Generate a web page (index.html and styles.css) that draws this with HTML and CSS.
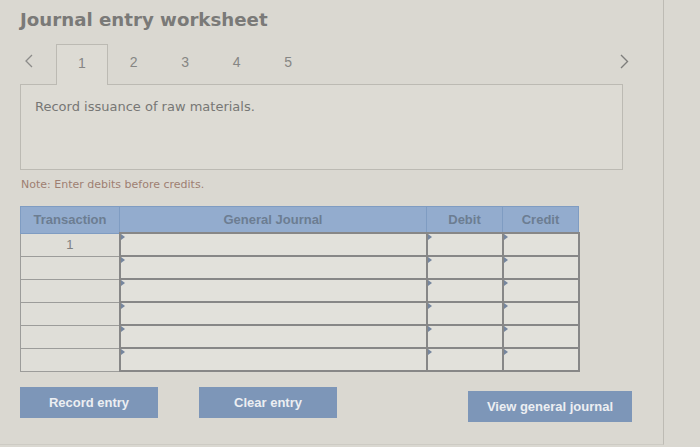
FILE: index.html
```html
<!DOCTYPE html>
<html>
<head>
<meta charset="utf-8">
<link rel="stylesheet" href="styles.css">
</head>
<body>
<div class="page">
  <h1 class="title">Journal entry worksheet</h1>
  <div class="tabbar">
    <div class="tabstrip">
      <div class="nav prev"><svg width="10" height="14" viewBox="0 0 10 14"><polyline points="8,1 2,7 8,13" fill="none" stroke="#8c8c8a" stroke-width="1.3"/></svg></div>
      <div class="tab active">1</div>
      <div class="tab">2</div>
      <div class="tab">3</div>
      <div class="tab">4</div>
      <div class="tab">5</div>
      <div class="fill"></div>
    </div>
    <div class="nav next"><svg width="10" height="15" viewBox="0 0 10 15"><polyline points="2,1 8.5,7.5 2,14" fill="none" stroke="#7e7e7c" stroke-width="1.4"/></svg></div>
  </div>
  <div class="panel">Record issuance of raw materials.</div>
  <p class="note">Note: Enter debits before credits.</p>
  <table class="journal">
    <colgroup>
      <col class="c-tr"><col class="c-gj"><col class="c-amt"><col class="c-amt">
    </colgroup>
    <thead>
      <tr><th>Transaction</th><th>General Journal</th><th>Debit</th><th>Credit</th></tr>
    </thead>
    <tbody>
      <tr><td class="tr">1</td><td class="in"></td><td class="in"></td><td class="in"></td></tr>
      <tr><td class="tr"></td><td class="in"></td><td class="in"></td><td class="in"></td></tr>
      <tr><td class="tr"></td><td class="in"></td><td class="in"></td><td class="in"></td></tr>
      <tr><td class="tr"></td><td class="in"></td><td class="in"></td><td class="in"></td></tr>
      <tr><td class="tr"></td><td class="in"></td><td class="in"></td><td class="in"></td></tr>
      <tr><td class="tr"></td><td class="in"></td><td class="in"></td><td class="in"></td></tr>
    </tbody>
  </table>
  <div class="actions">
    <button class="btn">Record entry</button>
    <button class="btn clear">Clear entry</button>
    <button class="btn view">View general journal</button>
  </div>
</div>
</body>
</html>
```

FILE: styles.css
```css
html, body {
  margin: 0;
  padding: 0;
  background: #dad8d1;
}
.page {
  box-sizing: border-box;
  width: 664px;
  height: 445px;
  padding: 8px 0 0 20px;
  border-right: 1px solid #bdbbb4;
  border-bottom: 1px solid #cdcbc4;
  overflow: hidden;
}
.title {
  margin: 0;
  font-family: "DejaVu Sans", Verdana, sans-serif;
  font-weight: bold;
  font-size: 18.2px;
  line-height: 23px;
  color: #7a7a78;
}
.tabbar {
  display: flex;
  margin-top: 13px;
  height: 41px;
}
.tabstrip {
  display: flex;
  width: 603px;
}
.nav {
  display: flex;
  align-items: center;
  justify-content: center;
  padding-bottom: 6px;
  box-sizing: border-box;
}
.prev {
  width: 36px;
  justify-content: flex-start;
  padding-left: 4px;
  border-bottom: 1px solid #bcbab3;
}
.next {
  width: 16px;
  margin-left: -7px;
}
.tab {
  box-sizing: border-box;
  width: 51.5px;
  height: 41px;
  display: flex;
  align-items: center;
  justify-content: center;
  padding-bottom: 4px;
  font-family: "Liberation Sans", Arial, sans-serif;
  font-size: 14px;
  color: #868684;
  border-bottom: 1px solid #bcbab3;
}
.tab.active {
  width: 52px;
  border: 1px solid #bcbab3;
  border-bottom: none;
  background: #dddbd4;
}
.fill {
  flex: 1;
  border-bottom: 1px solid #bcbab3;
}
.panel {
  box-sizing: border-box;
  width: 603px;
  height: 85px;
  padding: 14px 0 0 14px;
  background: #dddbd4;
  border: 1px solid #bcbab3;
  border-top: none;
  font-family: "DejaVu Sans", Verdana, sans-serif;
  font-size: 13px;
  line-height: 16px;
  color: #777775;
}
.note {
  margin: 8px 0 0 1px;
  font-family: "DejaVu Sans", Verdana, sans-serif;
  font-size: 11px;
  line-height: 13px;
  color: #9e7f72;
}
.journal {
  margin-top: 15px;
  border-collapse: collapse;
  width: 558px;
  table-layout: fixed;
}
.c-tr { width: 99px; }
.c-gj { width: 307px; }
.c-amt { width: 76px; }
.journal th {
  height: 25px;
  padding: 0;
  background: #93acce;
  border: 1px solid #7f9cc2;
  font-family: "Liberation Sans", Arial, sans-serif;
  font-weight: bold;
  font-size: 13px;
  color: #6c7d92;
  text-align: center;
}
.journal td {
  height: 21px;
  padding: 0;
  vertical-align: top;
}
.journal td.tr {
  background: #dfded8;
  border: 1px solid #9c9c9a;
  font-family: "Liberation Sans", Arial, sans-serif;
  font-size: 13px;
  line-height: 21px;
  color: #808080;
  text-align: center;
}
.journal td.in {
  background: #e2e1db;
  border: 2px solid #878787;
}
.journal td.in::before {
  content: "";
  display: block;
  width: 0;
  height: 0;
  border-top: 3px solid transparent;
  border-bottom: 3px solid transparent;
  border-left: 4px solid #76869e;
}
.actions {
  display: flex;
  align-items: flex-start;
  margin-top: 15px;
}
.btn {
  box-sizing: border-box;
  width: 138px;
  height: 31px;
  padding: 0;
  border: none;
  background: #7d96b8;
  font-family: "Liberation Sans", Arial, sans-serif;
  font-weight: bold;
  font-size: 13px;
  color: #eceef2;
}
.clear {
  margin-left: 41px;
}
.view {
  width: 164px;
  margin-left: 131px;
  margin-top: 4px;
}
```
